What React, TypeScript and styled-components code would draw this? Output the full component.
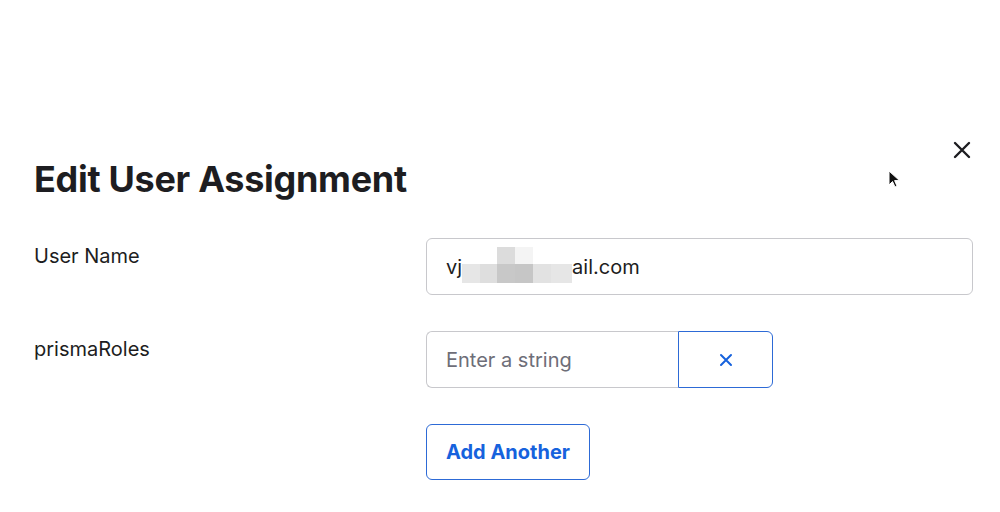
import React from "react";
import styled, { createGlobalStyle } from "styled-components";

const GlobalStyle = createGlobalStyle`
  html, body {
    margin: 0;
    padding: 0;
    background: #ffffff;
  }
  body {
    font-family: Inter, "Noto Sans", "Liberation Sans", sans-serif;
    color: #1d1d21;
  }
  * {
    box-sizing: border-box;
  }
`;

const Page = styled.div`
  position: relative;
  width: 1000px;
  height: 512px;
  overflow: hidden;
  padding: 141px 29px 0 34px;
`;

const Header = styled.header`
  display: flex;
  justify-content: space-between;
  align-items: flex-start;
`;

const Title = styled.h1`
  margin: 16px 0 0;
  font-size: 36px;
  line-height: 44px;
  font-weight: 700;
  letter-spacing: -0.3px;
  color: #1d1d21;
`;

const CloseButton = styled.button`
  width: 18px;
  height: 18px;
  padding: 0;
  border: none;
  background: none;
  display: flex;
  align-items: center;
  justify-content: center;
  color: #1d1d21;
  cursor: pointer;
`;

const Form = styled.div`
  margin-top: 37px;
  display: grid;
  grid-template-columns: 392px 547px;
  row-gap: 36px;
`;

const Label = styled.label`
  padding-top: 6px;
  font-size: 20px;
  line-height: 24px;
  color: #1d1d21;
`;

const Field = styled.div`
  display: flex;
  flex-direction: column;
  align-items: flex-start;
  gap: 36px;
`;

const TextBox = styled.div<{ $width?: number; $joined?: boolean }>`
  width: ${(p) => (p.$width ? `${p.$width}px` : "100%")};
  height: 57px;
  display: flex;
  align-items: center;
  padding: 0 19px;
  border: 1px solid #c8c8cc;
  border-radius: ${(p) => (p.$joined ? "6px 0 0 6px" : "6px")};
  border-right: ${(p) => (p.$joined ? "none" : "1px solid #c8c8cc")};
  font-size: 20px;
  color: #1d1d21;
  white-space: nowrap;
`;

const Placeholder = styled.span`
  color: #6e6e78;
`;

const InputGroup = styled.div`
  display: flex;
`;

const IconButton = styled.button`
  width: 95px;
  height: 57px;
  border: 1px solid #2d6ad6;
  border-radius: 0 6px 6px 0;
  background: #ffffff;
  color: #1662dd;
  display: flex;
  align-items: center;
  justify-content: center;
  padding: 0;
`;

const SecondaryButton = styled.button`
  width: 164px;
  height: 56px;
  border: 1px solid #2d6ad6;
  border-radius: 6px;
  background: #ffffff;
  color: #1662dd;
  font-family: inherit;
  font-size: 20px;
  font-weight: 700;
  padding: 0;
`;

const Redaction = styled.span`
  display: inline-grid;
  grid-template-columns: 18px 17px 18px 18px 18px 21px;
  grid-template-rows: 17px 19px;
  vertical-align: middle;
  margin-top: -3px;
`;

const Pixel = styled.span<{ $shade: string }>`
  background: ${(p) => p.$shade};
`;

const Pointer = styled.svg`
  position: absolute;
  left: 888px;
  top: 170px;
`;

const pixels = [
  "transparent", "transparent", "#dcdcdc", "#f4f4f4", "transparent", "transparent",
  "#e6e6e6", "#dedede", "#c8c8c8", "#c6c6c6", "#e2e2e2", "#e6e6e6",
];

const App = () => {
  return (
    <>
      <GlobalStyle />
      <Page>
        <Header>
          <Title>Edit User Assignment</Title>
          <CloseButton aria-label="Close">
            <svg width="18" height="18" viewBox="0 0 18 18">
              <path d="M2 2L16 16M16 2L2 16" stroke="currentColor" strokeWidth="2.4" strokeLinecap="round" />
            </svg>
          </CloseButton>
        </Header>
        <Form>
          <Label>User Name</Label>
          <Field>
            <TextBox>
              vj
              <Redaction>
                {pixels.map((c, i) => (
                  <Pixel key={i} $shade={c} />
                ))}
              </Redaction>
              ail.com
            </TextBox>
          </Field>
          <Label>prismaRoles</Label>
          <Field>
            <InputGroup>
              <TextBox $width={252} $joined>
                <Placeholder>Enter a string</Placeholder>
              </TextBox>
              <IconButton aria-label="Remove">
                <svg width="14" height="14" viewBox="0 0 14 14">
                  <path d="M2 2L12 12M12 2L2 12" stroke="currentColor" strokeWidth="2" strokeLinecap="round" />
                </svg>
              </IconButton>
            </InputGroup>
            <SecondaryButton>Add Another</SecondaryButton>
          </Field>
        </Form>
        <Pointer width="14" height="20" viewBox="0 0 14 20">
          <path d="M1 1L1 15L4.5 11.5L7 17L9 16L6.6 10.6L11.5 10.6Z" fill="#111" stroke="#fff" strokeWidth="1" />
        </Pointer>
      </Page>
    </>
  );
};

export default App;
